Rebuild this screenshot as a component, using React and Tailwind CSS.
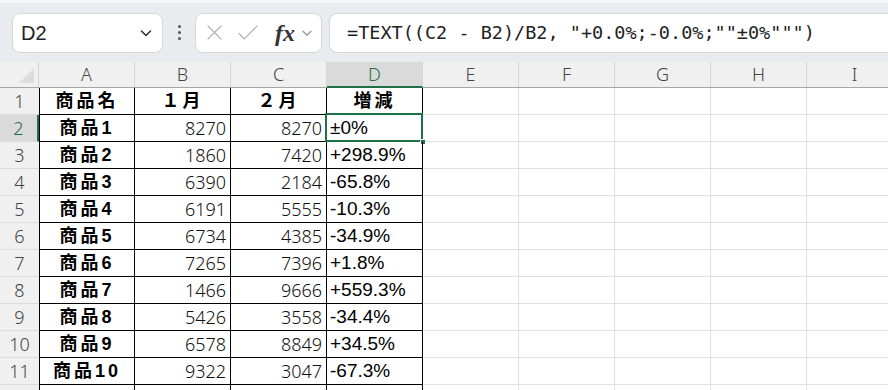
import React from 'react';

const COLS = ['A', 'B', 'C', 'D', 'E', 'F', 'G', 'H', 'I'];

const DATA = [
    ['商品名', '１月', '２月', '増減'],
    ['商品1', '8270', '8270', '±0%'],
    ['商品2', '1860', '7420', '+298.9%'],
    ['商品3', '6390', '2184', '-65.8%'],
    ['商品4', '6191', '5555', '-10.3%'],
    ['商品5', '6734', '4385', '-34.9%'],
    ['商品6', '7265', '7396', '+1.8%'],
    ['商品7', '1466', '9666', '+559.3%'],
    ['商品8', '5426', '3558', '-34.4%'],
    ['商品9', '6578', '8849', '+34.5%'],
    ['商品10', '9322', '3047', '-67.3%'],
    ['', '', '', ''],
];

const thin = { fontFamily: '"Noto Sans", "Liberation Sans", sans-serif' };
const jp = { fontFamily: '"Liberation Sans", "Noto Sans CJK JP", sans-serif' };

const Chevron = ({ className }) => (
    <svg viewBox="0 0 16 16" className={className} fill="none" stroke="currentColor" strokeWidth="1.6" strokeLinecap="round" strokeLinejoin="round">
        <path d="M3.5 6l4.5 4.5L12.5 6" />
    </svg>
);

const TopBar = () => (
    <div className="h-[62px] bg-[#e9ebef] flex items-center pl-[12px] border-t-[3px] border-[#f4f5f7]">
        <div className="w-[151px] h-[40px] bg-white border border-[#d5d7db] rounded-[8px] flex items-center justify-between pl-[8px] pr-[8px]">
            <span className="text-[20px] text-[#222]" style={{ fontFamily: '"Liberation Sans", sans-serif' }}>D2</span>
            <Chevron className="w-[16px] h-[16px] text-[#333]" />
        </div>
        <div className="w-[32px] flex flex-col items-center gap-[3px]">
            <span className="w-[3px] h-[3px] rounded-full bg-[#555]" />
            <span className="w-[3px] h-[3px] rounded-full bg-[#555]" />
            <span className="w-[3px] h-[3px] rounded-full bg-[#555]" />
        </div>
        <div className="w-[127px] h-[40px] bg-white border border-[#d5d7db] rounded-[8px] flex items-center pl-[10px]">
            <svg viewBox="0 0 16 16" className="w-[17px] h-[17px] text-[#a8a8a8]" fill="none" stroke="currentColor" strokeWidth="1.1">
                <path d="M1.5 1.5l13 13M14.5 1.5l-13 13" />
            </svg>
            <svg viewBox="0 0 20 16" className="ml-[14px] w-[22px] h-[17px] text-[#b4b4b4]" fill="none" stroke="currentColor" strokeWidth="1.1">
                <path d="M1 8.5l5.5 5.5L19 1.5" />
            </svg>
            <span className="ml-[16px] text-[24px] italic font-bold text-[#333] leading-none" style={{ fontFamily: '"Liberation Serif", serif' }}>fx</span>
            <Chevron className="ml-[5px] w-[14px] h-[14px] text-[#999]" />
        </div>
        <div className="ml-[7px] flex-1 h-[40px] bg-white border border-[#d5d7db] rounded-l-[8px] border-r-0 flex items-center pl-[17px]">
            <span className="text-[18.5px] text-[#222] whitespace-pre" style={{ fontFamily: '"DejaVu Sans Mono", "Liberation Mono", monospace' }}>
                {'=TEXT((C2 - B2)/B2, "+0.0%;-0.0%;""±0%""")'}
            </span>
        </div>
    </div>
);

const HeaderRow = () => (
    <div className="flex h-[26px] bg-[#f0f0f0] border-b border-[#a6a6a6]">
        <div className="w-[39px] shrink-0 relative border-r border-[#d4d4d4]">
            <svg viewBox="0 0 16 16" className="absolute right-[4px] bottom-[4px] w-[15px] h-[15px]">
                <path d="M16 0V16H0Z" fill="#dcdcdc" />
            </svg>
        </div>
        {COLS.map((c) => (
            <div
                key={c}
                className={c === 'D'
                    ? 'w-[96px] shrink-0 flex items-center justify-center bg-[#dadada] text-[#1e7145] border-r border-[#d4d4d4] border-b-2 border-b-[#1e7145] -mb-[1px] text-[18px] font-light'
                    : 'w-[96px] shrink-0 flex items-center justify-center text-[#444] border-r border-[#d4d4d4] text-[18px] font-light'}
                style={thin}
            >
                {c}
            </div>
        ))}
    </div>
);

const Cell = ({ r, c, value }) => {
    const inTable = c < 4;
    const base = 'w-[96px] shrink-0 h-full flex items-center border-r border-b overflow-visible whitespace-nowrap ';
    const border = inTable ? 'border-black ' : 'border-[#e1e1e1] ';
    const left = c === 0 ? 'border-l border-l-black ' : '';
    if (c === 0) {
        return (
            <div className={base + border + left + 'justify-center text-[18px] font-bold text-black tracking-[3px]'} style={jp}>
                {value}
            </div>
        );
    }
    if (r === 0) {
        return (
            <div className={base + border + 'justify-center text-[18px] font-bold text-black tracking-[3px]'} style={jp}>
                {value}
            </div>
        );
    }
    if (c === 1 || c === 2) {
        return (
            <div className={base + border + 'justify-end pr-[4px] text-[18px] font-light text-[#111]'} style={thin}>
                {value}
            </div>
        );
    }
    if (c === 3) {
        return (
            <div className={base + border + 'relative justify-start pl-[3px] text-[19px] text-black'} style={{ fontFamily: '"Liberation Sans", sans-serif' }}>
                {value}
                {r === 1 && (
                    <>
                        <div className="absolute -left-[2px] -top-[2px] -right-[1px] -bottom-[1px] border-2 border-[#1e7145]" />
                        <div className="absolute -right-[4px] -bottom-[4px] w-[6px] h-[6px] bg-[#1e7145] border border-white" />
                    </>
                )}
            </div>
        );
    }
    return <div className={base + border} />;
};

const Row = ({ r, cells }) => {
    const selected = r === 1;
    // 12行目はほぼ画面外なので番号は出さない
    const label = r < 11 ? r + 1 : '';
    return (
        <div className="flex h-[27px]">
            <div
                className={selected
                    ? 'w-[39px] shrink-0 flex items-center justify-center bg-[#dadada] text-[#1e7145] border-b border-[#dcdcdc] border-r-2 border-r-[#1e7145] text-[18px] font-light'
                    : 'w-[39px] shrink-0 flex items-center justify-center bg-[#f0f0f0] text-[#444] border-b border-[#dcdcdc] text-[18px] font-light'}
                style={thin}
            >
                {label}
            </div>
            {COLS.map((col, c) => (
                <Cell key={col} r={r} c={c} value={cells[c] || ''} />
            ))}
        </div>
    );
};

export default function App() {
    return (
        <div className="w-[888px] h-[390px] overflow-hidden bg-white">
            <TopBar />
            <HeaderRow />
            {DATA.map((cells, r) => (
                <Row key={r} r={r} cells={cells} />
            ))}
        </div>
    );
}
